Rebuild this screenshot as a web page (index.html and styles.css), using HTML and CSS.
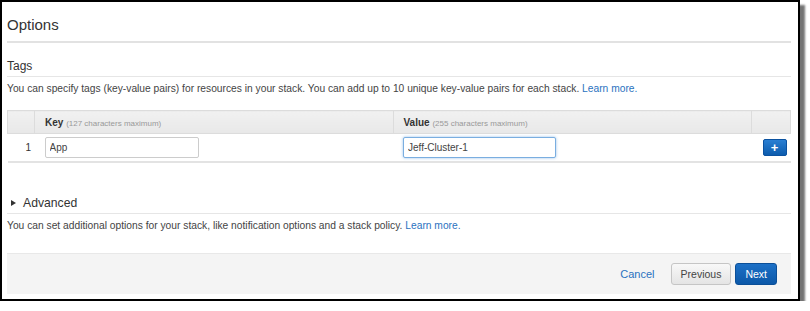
FILE: index.html
```html
<!DOCTYPE html>
<html lang="en">
<head>
  <meta charset="UTF-8">
  <title>Options</title>
  <link rel="stylesheet" href="styles.css">
</head>
<body>
  <div class="frame">
    <h1 class="page-title">Options</h1>

    <section class="section">
      <h2 class="section-title">Tags</h2>
      <p class="help">You can specify tags (key-value pairs) for resources in your stack. You can add up to 10 unique key-value pairs for each stack. <a href="#">Learn more.</a></p>

      <table class="tags">
        <thead>
          <tr>
            <th class="col-num"></th>
            <th class="col-key">Key <span class="hint">(127 characters maximum)</span></th>
            <th class="col-value">Value <span class="hint">(255 characters maximum)</span></th>
            <th class="col-action"></th>
          </tr>
        </thead>
        <tbody>
          <tr>
            <td class="num">1</td>
            <td><input type="text" class="field" value="App"></td>
            <td><input type="text" class="field focused" value="Jeff-Cluster-1"></td>
            <td class="action"><button class="btn-add">+</button></td>
          </tr>
        </tbody>
      </table>
    </section>

    <section class="section advanced">
      <h2 class="section-title toggle"><span class="caret"></span>Advanced</h2>
      <p class="help">You can set additional options for your stack, like notification options and a stack policy. <a href="#">Learn more.</a></p>
    </section>

    <div class="footer">
      <a href="#" class="cancel">Cancel</a>
      <button class="btn btn-default">Previous</button>
      <button class="btn btn-primary">Next</button>
    </div>
  </div>
</body>
</html>
```

FILE: styles.css
```css
body {
  margin: 0;
  padding: 0;
  background-color: #fff;
  font-family: 'Liberation Sans', Arial, sans-serif;
  color: #444;
}
.frame {
  width: 784px;
  height: 297px;
  padding: 0 7px 0 5px;
  border: 2px solid #000;
  box-shadow: 5px 5px 2px rgba(0, 0, 0, 0.55);
  display: flex;
  flex-direction: column;
}
a {
  color: #2a72c0;
  text-decoration: none;
}
.page-title {
  margin: 0;
  padding-top: 13px;
  padding-bottom: 6px;
  font-size: 15px;
  line-height: 20px;
  font-weight: normal;
  color: #333;
  border-bottom: 2px solid #e2e2e2;
}
.section-title {
  margin: 0;
  font-size: 12px;
  line-height: 16px;
  font-weight: normal;
  color: #333;
  border-bottom: 1px solid #e6e6e6;
  padding-bottom: 2px;
}
.section {
  padding-top: 15px;
}
.help {
  margin: 0;
  padding-top: 5px;
  font-size: 10.25px;
  line-height: 14px;
}
.tags {
  width: 100%;
  margin-top: 14px;
  border-collapse: collapse;
  table-layout: fixed;
}
.tags th {
  height: 22px;
  padding: 0 0 0 10px;
  text-align: left;
  font-size: 10px;
  font-weight: bold;
  color: #333;
  background: linear-gradient(#f1f1f1, #e8e8e8);
  border: 1px solid #dcdcdc;
}
.tags .col-num {
  width: 26px;
  padding: 0;
}
.tags .col-action {
  width: 38px;
  padding: 0;
}
.hint {
  font-size: 8px;
  font-weight: normal;
  color: #999;
}
.tags td {
  height: 27px;
  padding: 0 0 0 10px;
  border-bottom: 2px solid #e3e3e3;
  font-size: 10px;
}
.tags td.num {
  padding: 0 0 0 18px;
  color: #333;
}
.tags td.action {
  padding: 0;
  text-align: right;
}
.field {
  box-sizing: border-box;
  width: 154px;
  height: 21px;
  padding: 0 4px;
  border: 1px solid #ccc;
  border-radius: 2px;
  font-family: 'Liberation Sans', Arial, sans-serif;
  font-size: 10px;
  color: #444;
}
.field.focused {
  width: 153px;
  border-color: #7aaee0;
  box-shadow: 0 0 3px rgba(80, 150, 220, 0.6);
}
.btn-add {
  width: 24px;
  height: 17px;
  margin-right: 4px;
  padding: 0;
  border: 1px solid #0b52a0;
  border-radius: 2px;
  background: linear-gradient(#2a7fd3, #0c5cad);
  color: #fff;
  font-family: 'Liberation Sans', Arial, sans-serif;
  font-size: 13px;
  font-weight: bold;
  line-height: 14px;
}
.advanced {
  padding-top: 32px;
}
.toggle {
  display: flex;
  align-items: center;
  font-size: 12.2px;
}
.caret {
  width: 0;
  height: 0;
  margin: 0 7px 0 4px;
  border-top: 3px solid transparent;
  border-bottom: 3px solid transparent;
  border-left: 5px solid #333;
}
.footer {
  margin-top: 20px;
  height: 40px;
  background-color: #f4f4f4;
  border-top: 1px solid #e8e8e8;
  display: flex;
  align-items: center;
  justify-content: flex-end;
  padding-right: 14px;
  gap: 4px;
}
.cancel {
  font-size: 11px;
  margin-right: 12px;
}
.btn {
  height: 22px;
  padding: 0 9px;
  border-radius: 3px;
  font-family: 'Liberation Sans', Arial, sans-serif;
  font-size: 10.5px;
}
.btn-default {
  border: 1px solid #c5c5c5;
  background: linear-gradient(#f8f8f8, #e4e4e4);
  color: #444;
}
.btn-primary {
  border: 1px solid #0b4f98;
  background: linear-gradient(#1c70c6, #0c58a8);
  color: #fff;
}
```
